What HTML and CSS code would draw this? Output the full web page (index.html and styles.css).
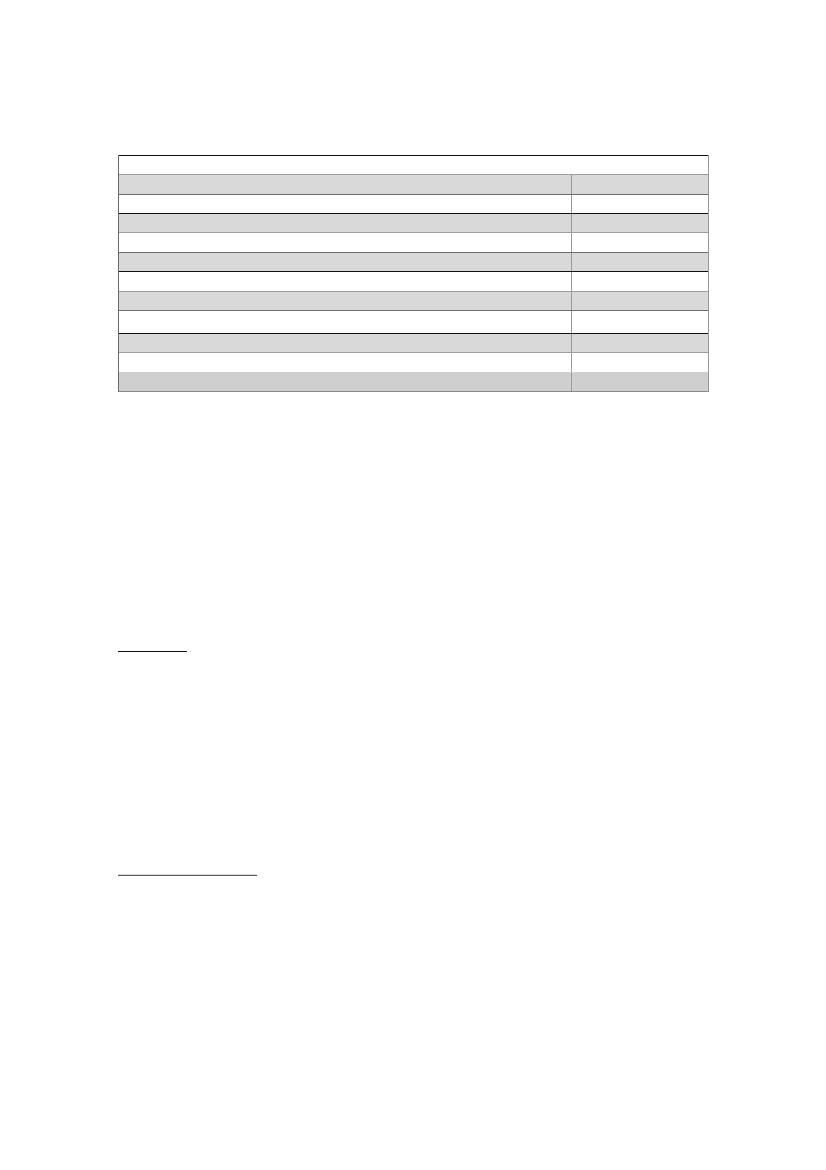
FILE: index.html
```html
<!DOCTYPE html>
<html lang="en">
<head>
<meta charset="utf-8">
<title>Document</title>
<link rel="stylesheet" href="styles.css">
</head>
<body>
<div class="page">
  <div class="table">
    <div class="row head h19 top-black"><div class="cell full"></div></div>
    <div class="row gray h20 line-gray"><div class="cell main"></div><div class="cell side"></div></div>
    <div class="row h19 line-dark"><div class="cell main"></div><div class="cell side"></div></div>
    <div class="row gray h19 line-black"><div class="cell main"></div><div class="cell side"></div></div>
    <div class="row h20 line-gray"><div class="cell main"></div><div class="cell side"></div></div>
    <div class="row gray h19 line-dark"><div class="cell main"></div><div class="cell side"></div></div>
    <div class="row h20 line-black"><div class="cell main"></div><div class="cell side"></div></div>
    <div class="row gray h19 line-gray"><div class="cell main"></div><div class="cell side"></div></div>
    <div class="row h23 line-dark"><div class="cell main"></div><div class="cell side"></div></div>
    <div class="row gray h19 line-black"><div class="cell main"></div><div class="cell side"></div></div>
    <div class="row h20 line-gray"><div class="cell main"></div><div class="cell side"></div></div>
    <div class="row darker h19 line-none"><div class="cell main"></div><div class="cell side"></div></div>
  </div>
  <div class="rule rule-short"></div>
  <div class="rule rule-long"></div>
</div>
</body>
</html>
```
FILE: styles.css
```css
html, body {
  margin: 0;
  padding: 0;
  background: #ffffff;
  font-family: "Liberation Sans", Arial, sans-serif;
}
.page {
  width: 826px;
  height: 1170px;
  box-sizing: border-box;
  padding: 155px 0 0 118px;
}
.table {
  width: 591px;
  box-sizing: border-box;
  border-left: 1px solid #6a6a6a;
  border-right: 1px solid #9a9a9a;
  border-bottom: 1px solid #8a8a8a;
  display: flex;
  flex-direction: column;
}
.row {
  display: flex;
  box-sizing: border-box;
  border-top: 1px solid transparent;
}
.h19 { height: 19px; }
.h20 { height: 20px; }
.h23 { height: 23px; }
.top-black { border-top-color: #111111; }
.line-black { border-top-color: #111111; }
.line-gray { border-top-color: #9c9c9c; }
.line-dark { border-top-color: #6c6c6c; }
.line-none { border-top-color: #d0cece; }
.gray { background: #d9d9d9; }
.darker { background: #d0cece; }
.cell.full { flex: 1; }
.cell.main { width: 452px; flex: none; }
.cell.side { flex: 1; border-left: 1px solid #9a9a9a; }
.rule {
  height: 1px;
}
.rule-short {
  width: 69px;
  background: #111111;
  margin-top: 259px;
}
.rule-long {
  width: 139px;
  background: #5a5a5a;
  margin-top: 223px;
  box-shadow: 0 -1px 0 #dcdcdc;
}
```
